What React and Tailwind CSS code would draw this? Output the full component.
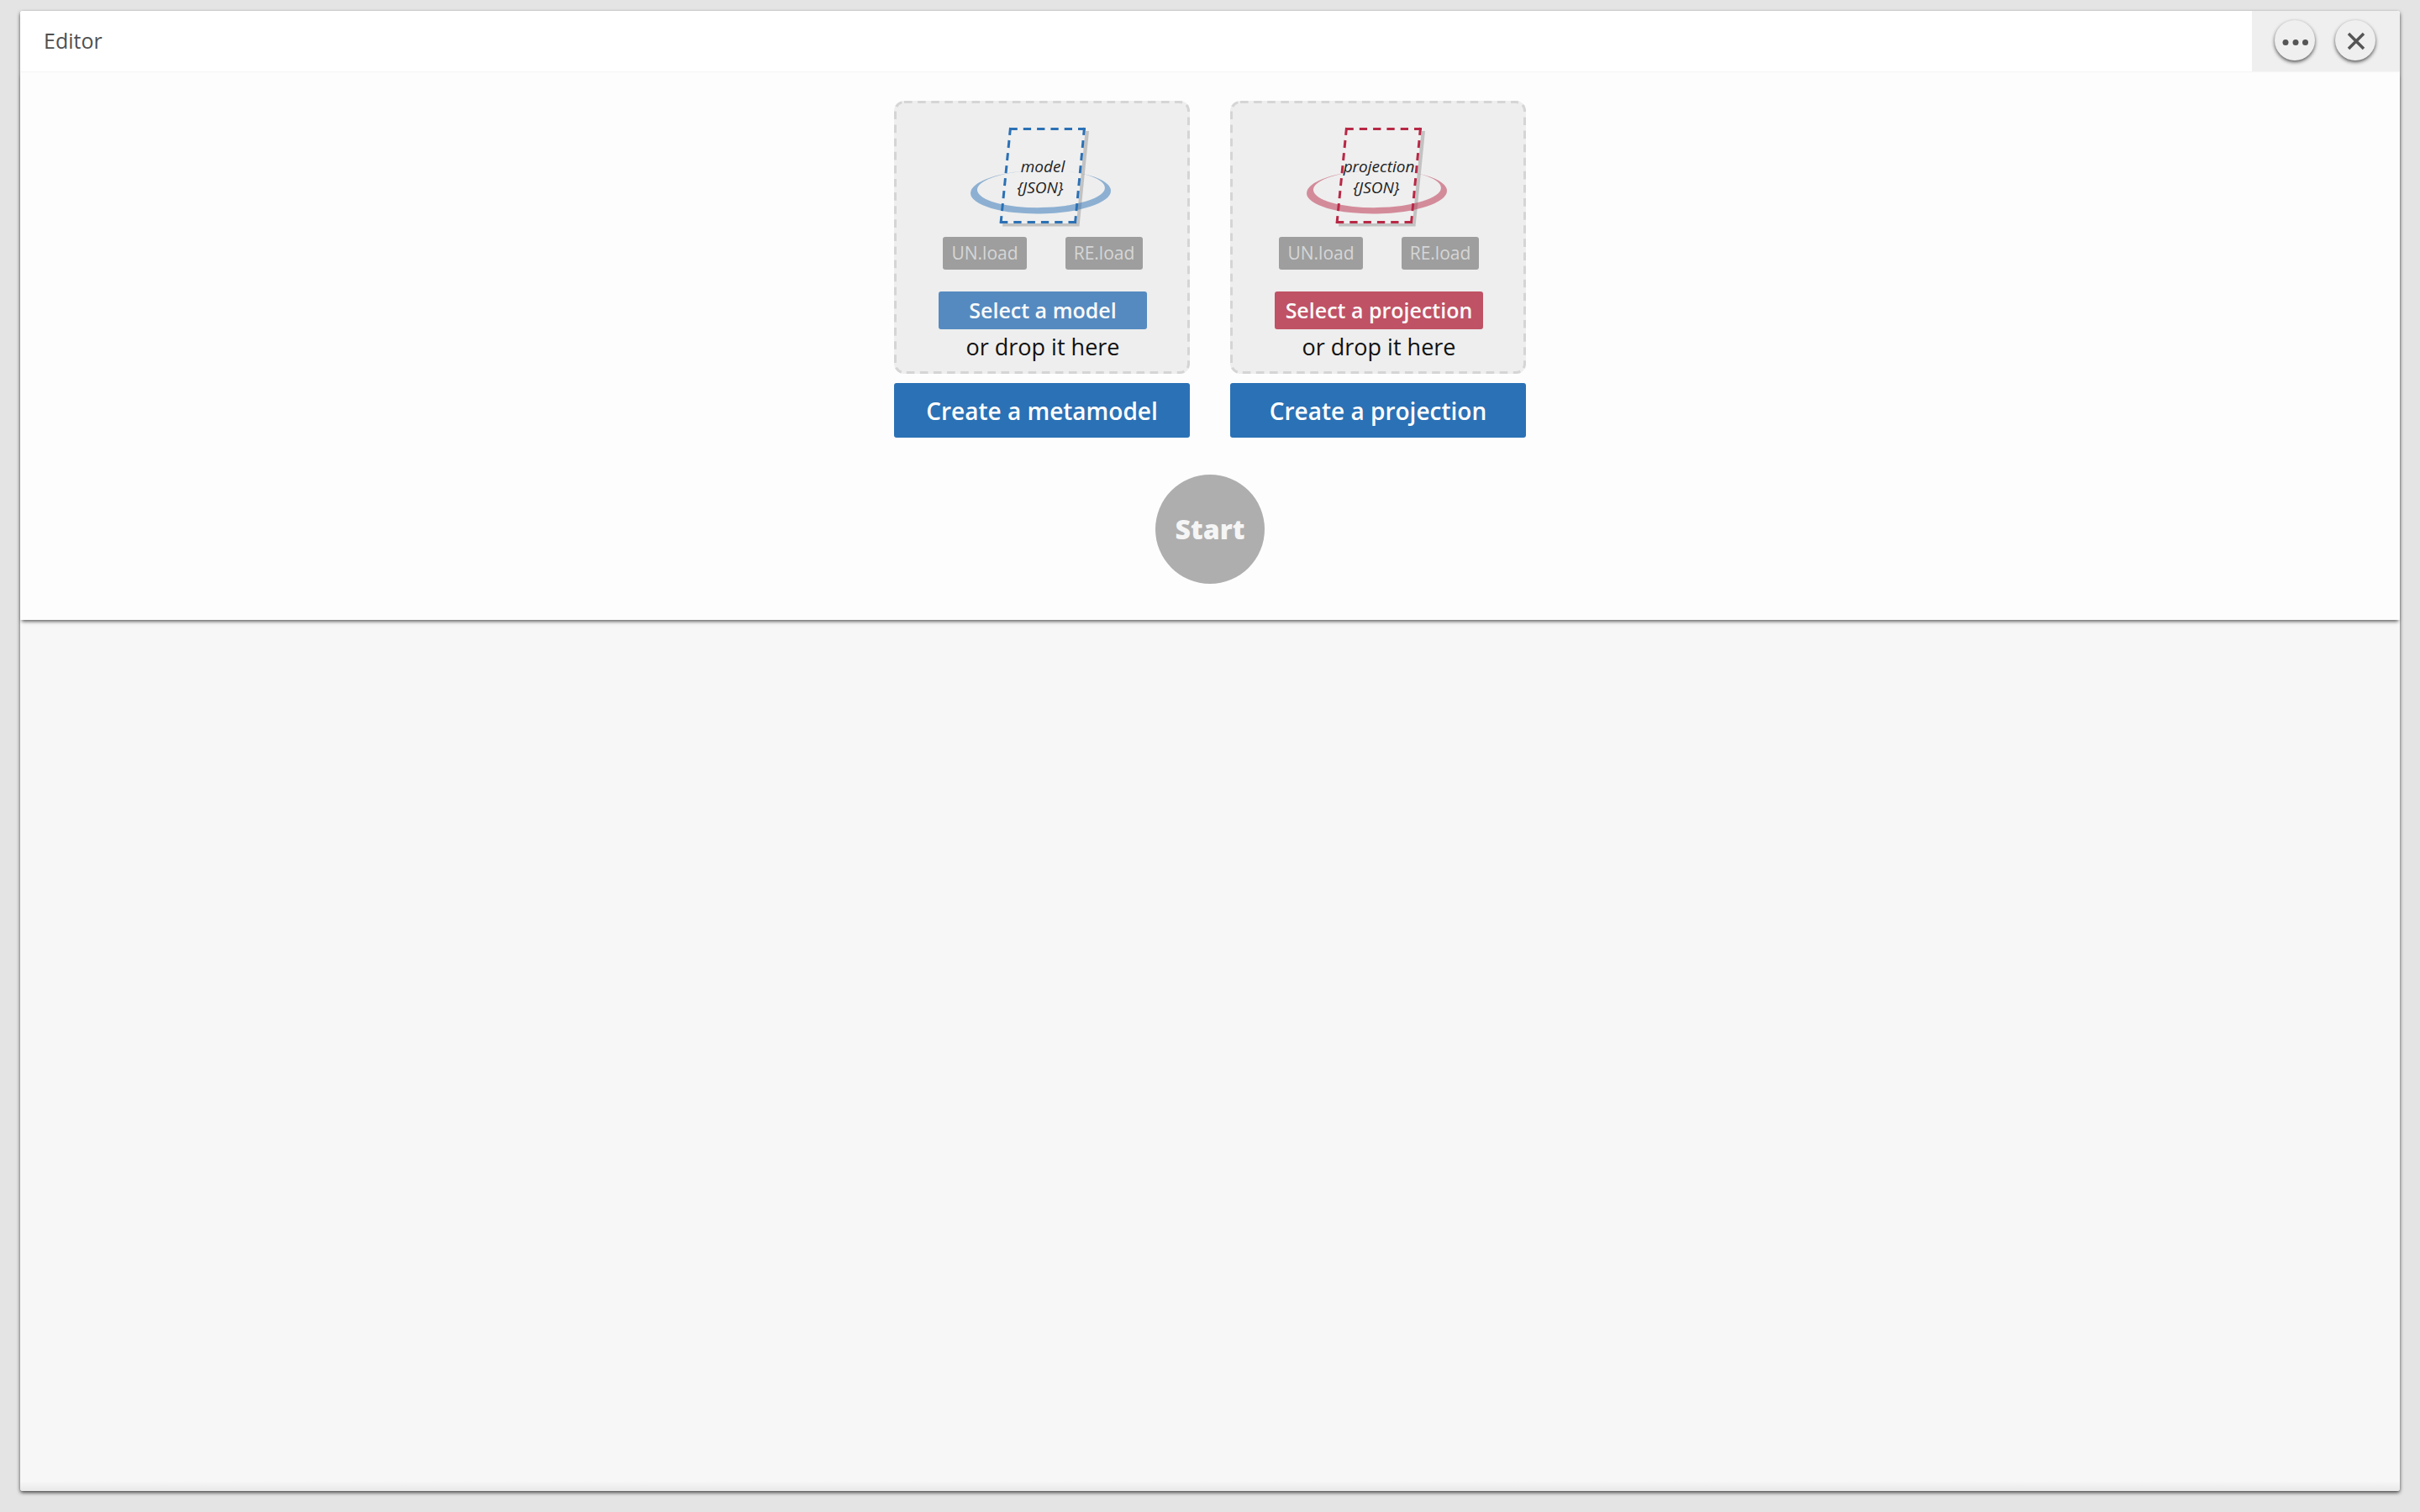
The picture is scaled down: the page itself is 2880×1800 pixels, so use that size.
const themes = {
  model: {
    stroke: "#2b71b5",
    select: "bg-[#558ac0]",
  },
  projection: {
    stroke: "#b82846",
    select: "bg-[#c05265]",
  },
};

function DocumentArt({ label, stroke }) {
  return (
    <svg width="180" height="126" viewBox="0 0 180 126" className="block" aria-hidden="true">
      <path d="M54 11 H145 L133.500 124.500 H42 Z" fill="#c2c2c2" />
      <path d="M50.500 7 H141 L130 121 H39 Z" fill="#efefef" />
      <g fill="none" stroke={stroke} strokeWidth="3">
        <path d="M50.500 8.500 H141" strokeDasharray="9.300 7" />
        <path d="M39 119.500 H130" strokeDasharray="9.300 7" />
        <path d="M51.500 7 L40 121" strokeDasharray="9 6.100" />
        <path d="M139.500 7 L128.500 121" strokeDasharray="9 6.100" />
      </g>
      <path
        d="M4 83.500 a83.500 26 0 1 0 167 0 a83.500 26 0 1 0 -167 0 Z M12 79.800 a76 22.300 0 1 0 152 0 a76 22.300 0 1 0 -152 0 Z"
        fill={stroke}
        fillRule="evenodd"
        opacity="0.5"
        transform="rotate(-1 87.500 83.500)"
      />
      <g fill="#222" fontSize="19" fontStyle="italic" textAnchor="middle">
        <text x="90" y="60">{label}</text>
        <text x="87" y="85">{"{JSON}"}</text>
      </g>
    </svg>
  );
}

function LoadButton({ children, className }) {
  return (
    <button
      type="button"
      disabled
      className={`h-[39px] rounded-[3px] bg-[#9e9e9e] text-[21px] leading-none text-[#d6d6d6] ${className}`}
    >
      {children}
    </button>
  );
}

function DashedOutline() {
  return (
    <svg className="pointer-events-none absolute inset-0 size-full overflow-hidden rounded-xl" aria-hidden="true">
      <rect
        width="100%"
        height="100%"
        rx="12"
        fill="none"
        stroke="#d5d5d5"
        strokeWidth="6"
        strokeDasharray="9.600 6.500"
      />
    </svg>
  );
}

function Loader({ kind, createLabel }) {
  const theme = themes[kind];
  return (
    <section className="flex w-[352px] flex-col gap-[11px]">
      <div className="relative flex flex-col items-center rounded-xl bg-[#eee] pt-[25px] pb-[11px] pl-0.5">
        <DashedOutline />
        <DocumentArt label={kind} stroke={theme.stroke} />
        <div className="mt-[11px] flex gap-[46px]">
          <LoadButton className="w-[100px]">UN.load</LoadButton>
          <LoadButton className="w-[92px]">RE.load</LoadButton>
        </div>
        <button
          type="button"
          className={`mt-[26px] h-[45px] w-[248px] rounded-[3px] text-[25px] leading-none font-semibold whitespace-nowrap text-[#fafafa] ${theme.select}`}
        >
          Select a {kind}
        </button>
        <p className="mt-0.5 mb-0.5 text-[27px] leading-[38px] text-[#111]">or drop it here</p>
      </div>
      <button
        type="button"
        className="h-[65px] rounded-[3px] bg-[#2b71b5] text-[28px] leading-none font-semibold whitespace-nowrap text-white"
      >
        {createLabel}
      </button>
    </section>
  );
}

function RoundButton({ label, children }) {
  return (
    <button
      type="button"
      aria-label={label}
      className="flex size-12 items-center justify-center rounded-full bg-[#efefef] text-[#555] shadow-[0_2px_4px_rgba(0,0,0,0.65)]"
    >
      {children}
    </button>
  );
}

export default function App() {
  return (
    <div className="flex min-h-screen flex-col bg-[#e4e4e4] px-6 pt-[13px] pb-[25px] font-['Open_Sans','Noto_Sans',sans-serif]">
      <main className="flex grow flex-col rounded-[3px] bg-[linear-gradient(to_top,#e9e9e9,#f7f7f7_12px)] shadow-[0_2px_4px_rgba(0,0,0,0.7)]">
        <header className="flex h-[72px] items-stretch justify-between rounded-t-[3px] bg-white">
          <h1 className="flex items-center pl-7 text-[25px] font-medium text-[#505050]">Editor</h1>
          <div className="flex items-center gap-6 rounded-tr-[3px] bg-[#efefef] pr-[29px] pb-0.5 pl-[27px]">
            <RoundButton label="More options">
              <svg width="32" height="48" viewBox="0 0 32 48" fill="currentColor">
                <circle cx="5" cy="26.500" r="3.500" />
                <circle cx="17" cy="26.500" r="3.500" />
                <circle cx="28.500" cy="26.500" r="3.500" />
              </svg>
            </RoundButton>
            <RoundButton label="Close">
              <svg width="24" height="24" viewBox="0 0 24 24" fill="none" stroke="currentColor" strokeWidth="3.500">
                <path d="M4 4 L22 22 M22 4 L4 22" />
              </svg>
            </RoundButton>
          </div>
        </header>
        <div className="flex flex-col items-center bg-[#fdfdfd] pt-[35px] pb-[43px] shadow-[inset_0_1px_1px_#f6f6f6,0_4px_4px_-2px_rgba(0,0,0,0.6)]">
          <div className="flex flex-wrap justify-center gap-12">
            <Loader kind="model" createLabel="Create a metamodel" />
            <Loader kind="projection" createLabel="Create a projection" />
          </div>
          <button
            type="button"
            disabled
            className="mt-11 size-[130px] rounded-full bg-[#aeaeae] text-[32px] leading-none font-extrabold text-[#f5f5f5]"
          >
            Start
          </button>
        </div>
      </main>
    </div>
  );
}
